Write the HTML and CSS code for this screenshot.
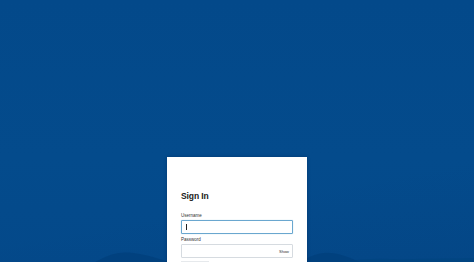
FILE: index.html
```html
<!DOCTYPE html>
<html lang="en">
<head>
<meta charset="utf-8">
<title>Sign In</title>
<link rel="stylesheet" href="styles.css">
</head>
<body>
<div class="backdrop">
  <svg class="hills" viewBox="0 0 474 30" preserveAspectRatio="none" aria-hidden="true">
    <path d="M95 30 C105 22 112 17 122 16 C132 15 140 18 152 22 L170 30 Z" fill="#003f7a" opacity="0.7"/>
    <path d="M300 30 L310 22 C318 17 326 15 334 17 C342 19 350 24 360 30 Z" fill="#003f7a" opacity="0.7"/>
    <path d="M340 30 C360 25 380 24 400 26 L474 24 L474 30 Z" fill="#00457f" opacity="0.6"/>
  </svg>
</div>
<main class="page">
  <section class="card">
    <h1 class="title">Sign In</h1>
    <form class="form">
      <label class="label" for="user">Username</label>
      <div class="field field-focus">
        <span class="caret"></span>
        <input id="user" class="input" type="text">
      </div>
      <label class="label label-pw" for="pw">Password</label>
      <div class="field">
        <input id="pw" class="input" type="password">
        <span class="show">Show</span>
      </div>
      <div class="next"></div>
    </form>
  </section>
</main>
</body>
</html>
```
FILE: styles.css
```css
* { box-sizing: border-box; }
html, body { margin: 0; padding: 0; }
body {
  width: 474px;
  height: 262px;
  overflow: hidden;
  background: #034a8c;
  font-family: "Liberation Sans", Arial, sans-serif;
  position: relative;
}
.backdrop {
  position: absolute;
  inset: 0;
  background:
    linear-gradient(170deg, rgba(0,0,0,0) 70%, rgba(0,40,90,0.08)),
    linear-gradient(#03498a, #044b8c 60%, #04498a);
}
.hills {
  position: absolute;
  left: 0;
  bottom: 0;
  width: 474px;
  height: 20px;
}
.page {
  position: relative;
  display: flex;
  justify-content: center;
  padding-top: 157px;
}
.card {
  width: 140px;
  height: 105px;
  background: #fff;
  padding: 34px 14px 0 14px;
  box-shadow: 0 0 3px rgba(0,20,60,0.35);
}
.title {
  margin: 0 0 12px 0;
  font-size: 8.5px;
  line-height: 10px;
  font-weight: 700;
  color: #1a1a1a;
  letter-spacing: -0.1px;
}
.form { display: flex; flex-direction: column; }
.label {
  font-size: 4.5px;
  line-height: 6px;
  color: #333;
  margin-bottom: 1px;
}
.label-pw { margin-top: 3px; }
.field {
  position: relative;
  display: flex;
  align-items: center;
  height: 14px;
  border: 1px solid #d6dbe0;
  border-radius: 1px;
  background: #fff;
}
.field-focus {
  border: 1px solid #6aa7cf;
  box-shadow: 0 0 1px #9cc6e2;
}
.input {
  flex: 1;
  min-width: 0;
  height: 100%;
  border: 0;
  outline: 0;
  padding: 0;
  background: transparent;
}
.caret {
  width: 1px;
  height: 6px;
  background: #222;
  margin-left: 4px;
}
.show {
  font-size: 4px;
  color: #333;
  padding-right: 3px;
}
.next {
  margin-top: 3px;
  width: 28px;
  height: 3px;
  border-top: 1px solid #e6e9ec;
}
```
